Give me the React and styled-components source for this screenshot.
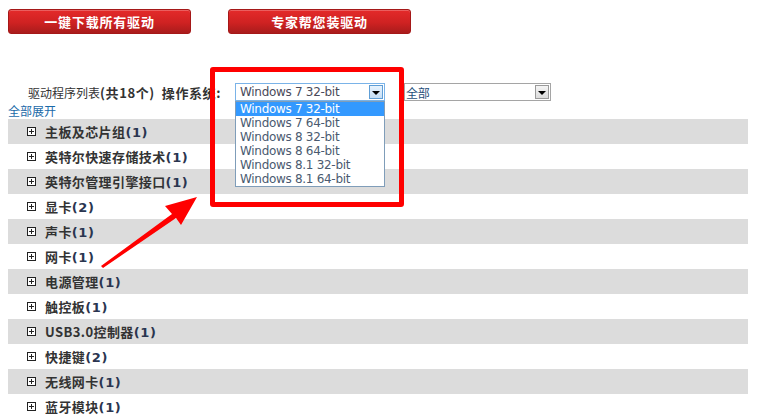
import React from "react";
import styled, { createGlobalStyle } from "styled-components";

const categories = [
  { name: "主板及芯片组", count: 1 },
  { name: "英特尔快速存储技术", count: 1 },
  { name: "英特尔管理引擎接口", count: 1 },
  { name: "显卡", count: 2 },
  { name: "声卡", count: 1 },
  { name: "网卡", count: 1 },
  { name: "电源管理", count: 1 },
  { name: "触控板", count: 1 },
  { name: "USB3.0控制器", count: 1 },
  { name: "快捷键", count: 2 },
  { name: "无线网卡", count: 1 },
  { name: "蓝牙模块", count: 1 },
];

const systems = [
  "Windows 7 32-bit",
  "Windows 7 64-bit",
  "Windows 8 32-bit",
  "Windows 8 64-bit",
  "Windows 8.1 32-bit",
  "Windows 8.1 64-bit",
];

export default function App() {
  return (
    <Page>
      <GlobalStyle />
      <Toolbar>
        <RedButton>一键下载所有驱动</RedButton>
        <RedButton>专家帮您装驱动</RedButton>
      </Toolbar>

      <FilterRow>
        <FilterLabel>
          驱动程序列表<b>(共18个)</b>
          <b className="os">操作系统:</b>
        </FilterLabel>
        <SelectBox $width={150} $focused>
          <span>Windows 7 32-bit</span>
          <ArrowButton $focused>
            <Caret />
          </ArrowButton>
          <OptionList>
            {systems.map((s, i) => (
              <Option key={s} $active={i === 0}>
                {s}
              </Option>
            ))}
          </OptionList>
        </SelectBox>
        <SelectBox $width={147}>
          <span className="cn">全部</span>
          <ArrowButton>
            <Caret />
          </ArrowButton>
        </SelectBox>
      </FilterRow>

      <ExpandAll>全部展开</ExpandAll>

      <List>
        {categories.map((c, i) => (
          <Row key={c.name} $striped={i % 2 === 0}>
            <PlusBox />
            <RowTitle>
              {c.name}
              <Count>({c.count})</Count>
            </RowTitle>
          </Row>
        ))}
      </List>

      <Highlight />
      <Pointer width="773" height="419" viewBox="0 0 773 419">
        <polygon
          fill="#ff0000"
          points="101,266 172,214 165,206 197,197 181,225 176,218 103,268"
        />
      </Pointer>
    </Page>
  );
}

const GlobalStyle = createGlobalStyle`
  body {
    margin: 0;
    background: #fff;
    font-family: "Noto Sans CJK SC", "DejaVu Sans", sans-serif;
  }
`;

const Page = styled.div`
  position: relative;
  width: 773px;
  height: 419px;
  overflow: hidden;
  padding: 9px 0 0 8px;
  box-sizing: border-box;
`;

const Toolbar = styled.div`
  display: flex;
  gap: 37px;
`;

const RedButton = styled.button`
  width: 183px;
  height: 25px;
  border: 1px solid #a51818;
  border-radius: 3px;
  background: linear-gradient(#e42a2a, #cf2222 55%, #a91c1c);
  color: #fff;
  font-family: "Noto Sans CJK SC", sans-serif;
  font-weight: 700;
  font-size: 13px;
  letter-spacing: 0.8px;
  line-height: 23px;
  padding: 0;
  box-shadow: inset 0 1px 0 rgba(255, 255, 255, 0.25);
`;

const FilterRow = styled.div`
  display: flex;
  align-items: center;
  margin-top: 49px;
  padding-left: 20px;
  height: 18px;
`;

const FilterLabel = styled.div`
  width: 207px;
  font-size: 12px;
  color: #333;
  white-space: nowrap;
  b {
    font-weight: 700;
    font-size: 13px;
    letter-spacing: 0.6px;
  }
  .os {
    margin-left: 7px;
  }
`;

const SelectBox = styled.div`
  position: relative;
  width: ${(p) => p.$width}px;
  height: 18px;
  box-sizing: border-box;
  border: 1px solid ${(p) => (p.$focused ? "#7ab3e8" : "#a5a5a5")};
  display: flex;
  align-items: center;
  justify-content: space-between;
  margin-right: 19px;
  font-family: "DejaVu Sans", sans-serif;
  font-size: 12px;
  color: #4a4a5a;
  span {
    padding-left: 4px;
    letter-spacing: -0.3px;
  }
  .cn {
    font-family: "Noto Sans CJK SC", sans-serif;
    color: #1f4f7a;
    padding-left: 1px;
  }
`;

const ArrowButton = styled.div`
  width: 14px;
  height: 14px;
  margin-right: 1px;
  box-sizing: border-box;
  border: 1px solid ${(p) => (p.$focused ? "#5f9ed6" : "#9a9a9a")};
  background: ${(p) =>
    p.$focused
      ? "linear-gradient(#e8f3fd, #c4def6)"
      : "linear-gradient(#f4f4f4, #dcdcdc)"};
  display: flex;
  align-items: center;
  justify-content: center;
`;

const Caret = styled.div`
  width: 0;
  height: 0;
  border-left: 4px solid transparent;
  border-right: 4px solid transparent;
  border-top: 4px solid #000;
  margin-top: 1px;
`;

const OptionList = styled.div`
  position: absolute;
  top: 17px;
  left: -1px;
  width: 150px;
  box-sizing: border-box;
  border: 1px solid #7f9db9;
  background: #fff;
  z-index: 2;
`;

const Option = styled.div`
  height: 14px;
  line-height: 14px;
  padding-left: 4px;
  font-size: 12px;
  letter-spacing: -0.3px;
  background: ${(p) => (p.$active ? "#3399ff" : "#fff")};
  color: ${(p) => (p.$active ? "#fff" : "#4a5a70")};
`;

const ExpandAll = styled.div`
  font-size: 12px;
  line-height: 16px;
  color: #1a6aa8;
  margin-top: 2px;
`;

const List = styled.div`
  width: 740px;
`;

const Row = styled.div`
  height: 25px;
  display: flex;
  align-items: center;
  padding-left: 19px;
  background: ${(p) => (p.$striped ? "#dcdcdc" : "#fff")};
`;

const PlusBox = styled.div`
  position: relative;
  width: 9px;
  height: 9px;
  box-sizing: border-box;
  border: 1px solid #222;
  background: #fff;
  margin-right: 9px;
  &::before,
  &::after {
    content: "";
    position: absolute;
    background: #222;
  }
  &::before {
    left: 1px;
    top: 3px;
    width: 5px;
    height: 1px;
  }
  &::after {
    left: 3px;
    top: 1px;
    width: 1px;
    height: 5px;
  }
`;

const RowTitle = styled.span`
  font-size: 13px;
  font-weight: 700;
  color: #333;
  letter-spacing: 0.4px;
  line-height: 25px;
`;

const Count = styled.span`
  font-family: "DejaVu Sans", sans-serif;
  color: #2a3550;
  letter-spacing: 0.6px;
`;

const Highlight = styled.div`
  position: absolute;
  left: 210px;
  top: 67px;
  width: 194px;
  height: 140px;
  box-sizing: border-box;
  border: 5px solid #ff0000;
  border-radius: 3px;
  z-index: 3;
  pointer-events: none;
`;

const Pointer = styled.svg`
  position: absolute;
  left: 0;
  top: 0;
  z-index: 3;
  pointer-events: none;
`;
